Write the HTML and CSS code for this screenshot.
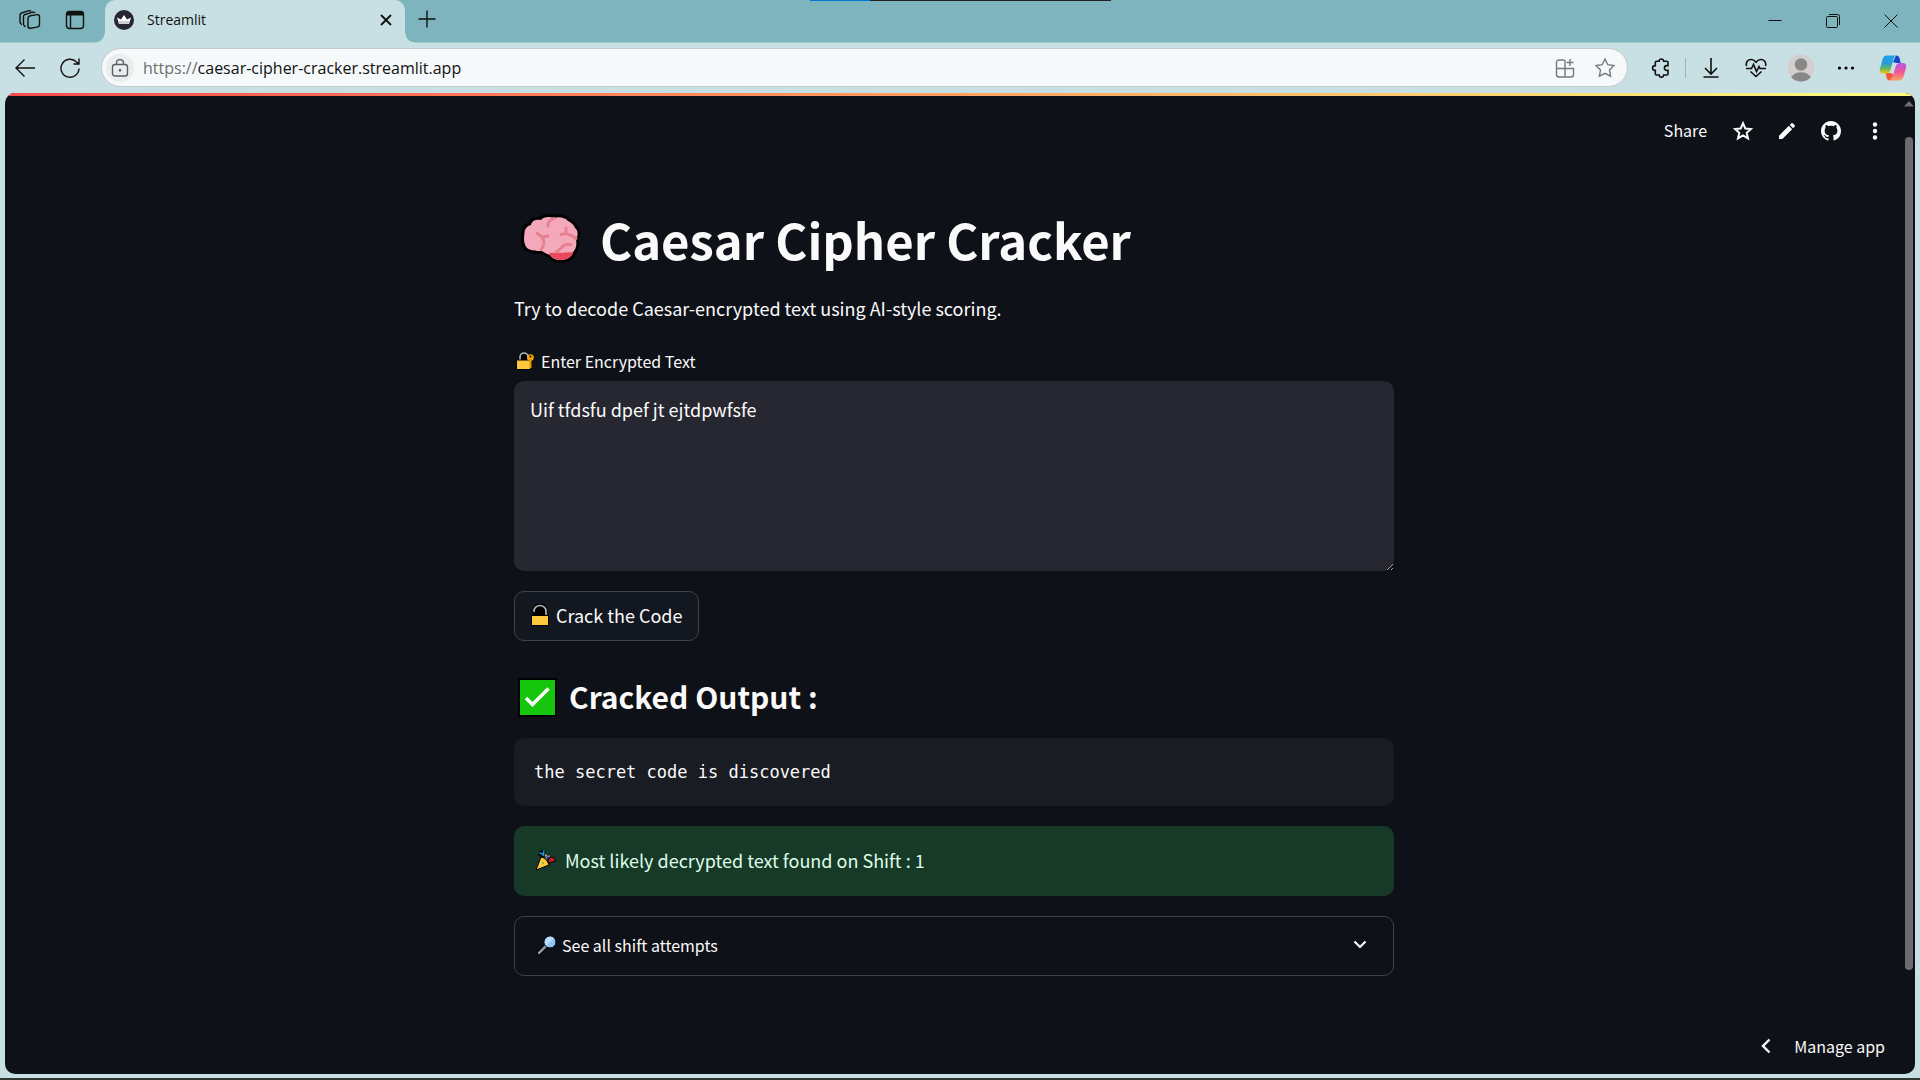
FILE: index.html
```html
<!DOCTYPE html>
<html lang="en">
<head>
<meta charset="utf-8">
<title>Streamlit</title>
<link rel="stylesheet" href="styles.css">
</head>
<body>
<header class="tabstrip">
  <div class="share-bar"></div>
  <div class="strip-tools">
    <button class="strip-btn" aria-label="Workspaces"><svg width="22" height="22" viewBox="0 0 22 22" class="line"><rect x="9" y="6.500" width="11.500" height="12.500" rx="2.500" transform="skewY(-9) translate(0 2)"/><path d="M6.500 17.500 5.500 17q-1-.5-1-2V7.500q0-1.500 1.500-2L14 3.200q1.500-.3 2 .8M3 15.500q-2-.5-2-2.500V6q0-1.500 1.500-2L10 1.700q1.500-.4 2 .8"/></svg></button>
    <button class="strip-btn" aria-label="Tab actions"><svg width="20" height="20" viewBox="0 0 20 20" class="line"><rect x="1.500" y="1.500" width="17" height="17" rx="3"/><path d="M2 3.500h16" stroke-width="4"/><path d="M5.500 5v13"/></svg></button>
  </div>
  <div class="tab">
    <svg width="20" height="20" viewBox="0 0 20 20"><circle cx="10" cy="10" r="10" fill="#262730"/><path d="M3 7.500 7 9.500 10 5l3 4.500 4-2-2 6.500H5z" fill="#fff"/><path d="m4.500 11 11 0-1 3H5.300z" fill="#d0d0d4"/></svg>
    <span class="tab-title">Streamlit</span>
    <button class="tab-close" aria-label="Close tab"><svg width="12" height="12" viewBox="0 0 12 12" class="line"><path d="m1 1 10 10M11 1 1 11" stroke-width="1.800"/></svg></button>
  </div>
  <button class="new-tab" aria-label="New tab"><svg width="18" height="18" viewBox="0 0 18 18" class="line"><path d="M9 .5v17M.5 9h17"/></svg></button>
  <div class="window-controls">
    <button aria-label="Minimize"><svg width="14" height="14" viewBox="0 0 14 14" class="line thin"><path d="M.5 6.500h13"/></svg></button>
    <button aria-label="Restore"><svg width="14" height="14" viewBox="0 0 14 14" class="line thin"><rect x=".5" y="2.500" width="11" height="11" rx="1"/><path d="M3 .5h8.500a2 2 0 0 1 2 2V11"/></svg></button>
    <button aria-label="Close"><svg width="14" height="14" viewBox="0 0 14 14" class="line thin"><path d="m.5.5 13 13m0-13-13 13"/></svg></button>
  </div>
</header>

<nav class="toolbar">
  <button class="tool" aria-label="Back"><svg width="20" height="20" viewBox="0 0 20 20" class="line"><path d="M9.500 1.500 1 10l8.500 8.500M1 10h19"/></svg></button>
  <button class="tool" aria-label="Refresh"><svg width="20" height="20" viewBox="0 0 20 20" class="line"><path d="M19 10.500A9 9 0 1 1 16.500 4L19 6M19 .5V6h-5.500"/></svg></button>
  <div class="address">
    <span class="site-info"><svg width="18" height="18" viewBox="0 0 18 18" class="line muted"><rect x="1.500" y="5.500" width="15" height="11.500" rx="2.500"/><path d="M5.500 5.500V4a3.500 3.500 0 0 1 7 0v1.500"/><circle cx="9" cy="11.300" r=".7" fill="#5c5f61"/></svg></span>
    <label class="scheme" for="url">https://</label><input id="url" class="url" type="text" value="caesar-cipher-cracker.streamlit.app">
    <button class="in-tool" aria-label="App available"><svg width="20" height="20" viewBox="0 0 20 20" class="line faint"><path d="M9.500 2H4a2.500 2.500 0 0 0-2.500 2.500v12A2.500 2.500 0 0 0 4 19h12a2.500 2.500 0 0 0 2.500-2.500v-6h-17M10 2v17M15 1v7M11.500 4.500h7"/></svg></button>
    <button class="in-tool" aria-label="Favorite"><svg width="20" height="20" viewBox="0 0 20 20" class="line faint"><path d="m10 1 2.800 5.700 6.200.9-4.500 4.400 1.100 6.200L10 15.300l-5.600 2.900L5.500 12 1 7.600l6.200-.9z"/></svg></button>
  </div>
  <button class="tool" aria-label="Extensions"><svg width="20" height="20" viewBox="0 0 20 20" class="line"><path d="M5.500 3.200h2.700a2.200 2.200 0 0 1 4.400 0h3.200q1.200 0 1.200 1.200v3.200h-1.200a2.400 2.400 0 0 0 0 4.800h1.200v3.400q0 1.200-1.200 1.200h-3.200a2.200 2.200 0 0 1-4.400 0H5.500q-1.200 0-1.200-1.200v-3.400H4a2.400 2.400 0 0 1 0-4.800h.3V4.400q0-1.200 1.200-1.200z" stroke-width="1.600"/></svg></button>
  <span class="divider"></span>
  <button class="tool" aria-label="Downloads"><svg width="20" height="20" viewBox="0 0 20 20" class="line"><path d="M10 0v16M4 10l6 6 6-6M2.500 19h15" stroke-width="1.600"/></svg></button>
  <button class="tool" aria-label="Browser essentials"><svg width="22" height="20" viewBox="0 0 22 20" class="line"><path d="M1.500 8C.5 4 3 1.500 6 1.500c2.500 0 4 1.500 5 2.800 1-1.300 2.500-2.800 5-2.800 3 0 5.500 2.500 4.500 6.500M1 10.500h5.500l2-4 3 7 2.500-5 1 2h6M5.500 13.500l5.500 5 5.500-5" stroke-width="1.600"/></svg></button>
  <button class="tool" aria-label="Profile"><svg width="28" height="28" viewBox="0 0 28 28"><defs><clipPath id="av"><circle cx="14" cy="14" r="13.500"/></clipPath></defs><g clip-path="url(#av)"><path fill="#d2d0ce" d="M0 0h28v28H0z"/><circle cx="14" cy="10.500" r="6.200" fill="#8a8886"/><path d="M3 28c0-13 22-13 22 0z" fill="#8a8886"/></g></svg></button>
  <button class="tool" aria-label="More"><svg width="18" height="18" viewBox="0 0 18 18"><circle cx="2.500" cy="9" r="1.600"/><circle cx="9" cy="9" r="1.600"/><circle cx="15.500" cy="9" r="1.600"/></svg></button>
  <button class="tool copilot" aria-label="Copilot"><svg width="28" height="28" viewBox="0 0 28 28"><defs>
    <linearGradient id="cpa" x1="0" y1="0" x2="0" y2="1"><stop offset="0" stop-color="#18a5e8"/><stop offset=".45" stop-color="#2b9bd8"/><stop offset=".7" stop-color="#5cb85c"/><stop offset="1" stop-color="#f5c518"/></linearGradient>
    <linearGradient id="cpb" x1="0" y1="0" x2="0" y2="1"><stop offset="0" stop-color="#b45ce8"/><stop offset=".5" stop-color="#f0559a"/><stop offset="1" stop-color="#ffa15e"/></linearGradient></defs>
    <path d="M17 1.500c2 0 3 1 3.500 2.500L21.700 9H17l-3-1z" fill="#1747c9"/><path d="M11 26.500c-2 0-3-1-3.300-2.500L6.500 19H12l3 2z" fill="#f4573a"/>
    <path d="M8 1.500h9.500c-2 .5-2.600 2-3.100 4L11.700 15c-.8 3-2 4.500-4.700 4.500H4C1 19.500.3 17 1 14.500L3.500 5.500c.8-2.800 2-4 4.500-4z" fill="url(#cpa)"/>
    <path d="M20 26.500h-9.500c2-.5 2.600-2 3.100-4l2.700-9c.8-3 2-4.500 4.700-4.500h3c3 0 3.700 2.500 3 5l-2.500 8.500c-.8 2.800-2 4-4.500 4z" fill="url(#cpb)"/></svg></button>
</nav>

<main class="viewport">
  <div class="app">
    <div class="rainbow"></div>
    <header class="app-header">
      <button class="share">Share</button>
      <button aria-label="Star"><svg width="20" height="20" viewBox="0 0 20 20" fill="none" stroke="#fafafa" stroke-width="2"><path d="m10 2.200 2.300 5.300 5.700.5-4.300 3.800 1.300 5.600-5-3-5 3 1.300-5.600L2 8l5.700-.5z"/></svg></button>
      <button aria-label="Edit"><svg width="16" height="16" viewBox="3 3 18 18" fill="#fafafa"><path d="M3 17.250V21h3.750L17.810 9.940l-3.750-3.750L3 17.250zM20.710 7.040c.39-.39.39-1.020 0-1.410l-2.340-2.340a1 1 0 0 0-1.410 0l-1.830 1.830 3.750 3.750 1.830-1.830z"/></svg></button>
      <button aria-label="GitHub"><svg width="20" height="20" viewBox="0 0 16 16" fill="#fafafa"><path d="M8 0C3.580 0 0 3.580 0 8c0 3.540 2.290 6.530 5.470 7.590.4.070.55-.17.55-.38 0-.19-.01-.82-.01-1.490-2.010.37-2.530-.49-2.690-.94-.09-.23-.48-.94-.82-1.130-.28-.15-.68-.52-.01-.53.63-.01 1.080.58 1.230.82.72 1.210 1.870.87 2.330.66.070-.52.28-.87.51-1.070-1.780-.2-3.640-.89-3.640-3.950 0-.87.31-1.590.82-2.150-.08-.2-.36-1.020.08-2.120 0 0 .67-.21 2.200.82.640-.18 1.320-.27 2-.27s1.360.09 2 .27c1.530-1.040 2.200-.82 2.200-.82.440 1.100.16 1.920.08 2.120.51.560.82 1.270.82 2.150 0 3.070-1.870 3.750-3.650 3.950.29.250.54.730.54 1.480 0 1.070-.01 1.930-.01 2.200 0 .21.15.46.55.38A8.010 8.010 0 0 0 16 8c0-4.420-3.580-8-8-8z"/></svg></button>
      <button aria-label="Menu"><svg width="18" height="18" viewBox="0 0 18 18" fill="#fafafa"><circle cx="9" cy="2.500" r="2.200"/><circle cx="9" cy="9" r="2.200"/><circle cx="9" cy="15.500" r="2.200"/></svg></button>
    </header>

    <section class="block">
      <h1 class="title"><svg class="e-brain" viewBox="6 9 60 50" role="img" aria-label="Brain"><path d="M9.500 28C9.500 24 12 21 16 20c1-5 6-5.500 10-5 2-3 8-4 13-2 5-1.500 11-.5 14 3 4 2 6 4 7 7 3 2 3.500 7 1 11 1 6 0 10-3 13-1 5-6 8-12 8s-9-2-11-5c-4-1-6-3-8-4-5 0-11 0-15-3-3-3-3.500-9-2.500-15z" fill="#f4a9ba" stroke="#000" stroke-width="6" stroke-linejoin="round" paint-order="stroke"/><path d="M34 48c3-.5 12 0 16-.5l8.500-.2C56 52.500 52 55 46 55s-9.500-2.500-12-7z" fill="#e8475c"/><path d="M39 13.500c-4 1-6 3.500-6 7.500M22 28l5 4 6-1M27 32c3 4 2 9-1 12.500M51 23v5.500M46 29.500c6-2 10 .5 15 4M56 39.500c-8-2-9 4.500-15 7.500" fill="none" stroke="#e6828f" stroke-width="3" stroke-linecap="round" stroke-linejoin="round"/></svg><span>Caesar Cipher Cracker</span></h1>
      <p class="lead">Try to decode Caesar-encrypted text using AI-style scoring.</p>

      <label class="field-label" for="cipher"><svg class="e-small" viewBox="0 0 20 20" aria-hidden="true"><path d="M4 10V7a4 4 0 0 1 8 0v3" fill="#000" stroke="#000" stroke-width="4"/><path d="M4 10V6a4 4 0 0 1 8 0v3" fill="none" stroke="#b4b8bc" stroke-width="1.600"/><path d="M.5 9h14v9.500H.5z" fill="#ffc83d" stroke="#000"/><circle cx="14.500" cy="6.500" r="3.300" fill="#f3a600"/><path d="M13.500 8h2v9h-2z" fill="#e19600"/><circle cx="14.500" cy="5.500" r=".9"/></svg><span>Enter Encrypted Text</span></label>
      <textarea id="cipher" class="cipher" spellcheck="false">Uif tfdsfu dpef jt ejtdpwfsfe</textarea>

      <button class="crack"><svg class="e-lock" viewBox="0 0 20 22" aria-hidden="true"><path d="M5 12V6.500a5 5 0 0 1 10 0V12" fill="#000" stroke="#000" stroke-width="5"/><path d="M4 8V7a6 5.500 0 0 1 12 0v5" fill="none" stroke="#b4b8bc" stroke-width="1.600"/><path d="M1.500 11.500h17v10h-17z" fill="#ffc83d" stroke="#000"/></svg><span>Crack the Code</span></button>

      <h2 class="subtitle"><svg class="e-check" viewBox="0 0 39 39" role="img" aria-label="Done"><path d="M0 0h39v39H0z"/><path d="M2 2h35v35H2z" fill="#16c60c"/><path d="m8 20 6.500 6.500L30.500 10.500" fill="none" stroke="#fff" stroke-width="3.500"/></svg><span>Cracked Output :</span></h2>
      <pre class="code"><code>the secret code is discovered</code></pre>

      <div class="success" role="status"><svg class="e-party" viewBox="0 0 22 22" aria-hidden="true"><path d="M1 21 6 8q6 1 8 8z" fill="#ffc83d" stroke="#000"/><path d="m4.500 3 4 2.500M9 1.500l-2 5M4 5l5 2" stroke="#000" stroke-width="4"/><path d="m4.500 4 5 1.500M9 1.500l-1 5.500" stroke="#1b9de2" stroke-width="1.500"/><path d="M13 13q1-6 5-5l3 4-7 2z" fill="#c3202a" stroke="#000"/><path d="M11 10q0-3 4-3" stroke="#7a6bd0" stroke-width="1.500" fill="none"/><circle cx="11" cy="6.500" r=".9" fill="#ffd23d"/><circle cx="8" cy="14" r="1" fill="#5bbf4a"/></svg><span>Most likely decrypted text found on Shift : 1</span></div>

      <button class="expander" aria-expanded="false"><svg class="e-small" viewBox="0 0 20 20" aria-hidden="true"><path d="m9 11-7 7" stroke="#000" stroke-width="5" stroke-linecap="round"/><path d="m9 11-7 7" stroke="#8d989d" stroke-width="2.500" stroke-linecap="round"/><circle cx="13" cy="7" r="6" fill="#8fc6f5" stroke="#000"/><path d="M9.200 11A5.500 5.500 0 0 1 17 3.200z" fill="#b9dcfa"/></svg><span class="expander-label">See all shift attempts</span><svg width="14" height="10" viewBox="0 0 14 10" fill="none" stroke="#fafafa" stroke-width="2.200"><path d="m1.500 1.500 5.500 5.500 5.500-5.500"/></svg></button>
    </section>

    <footer class="manage"><button class="manage-btn"><svg width="10" height="16" viewBox="0 0 10 16" fill="none" stroke="#fafafa" stroke-width="2.400"><path d="M8.500 1.500 2 8l6.500 6.500"/></svg><span>Manage app</span></button></footer>
  </div>
  <div class="scrollbar"><svg width="10" height="6" viewBox="0 0 10 6"><path d="M0 5.500 5 0l5 5.500z" fill="#6b6c70"/></svg><div class="thumb"></div></div>
</main>
<div class="taskbar-edge"></div>
</body>
</html>
```
FILE: styles.css
```css
* { box-sizing: border-box; }
body {
  margin: 0;
  min-height: 100vh;
  display: flex;
  flex-direction: column;
  background: #c8dfe3;
  font-family: "Noto Sans CJK SC", "Noto Sans", sans-serif;
}
button {
  border: 0;
  padding: 0;
  margin: 0;
  background: none;
  color: inherit;
  font: inherit;
  display: flex;
  align-items: center;
  justify-content: center;
}
svg { flex: none; display: block; }
.line { fill: none; stroke: #111; stroke-width: 1.4px; }
.thin { stroke-width: 1px; }
.muted { stroke: #5c5f61; }
.faint { stroke: #77797b; }

/* Tab strip */
.tabstrip {
  position: relative;
  height: 43px;
  display: flex;
  background: #7eb4be;
  border-bottom: 1px solid #a3c9d0;
  font-family: "Open Sans", "Noto Sans", sans-serif;
}
.share-bar {
  position: absolute;
  inset: 0 0 auto;
  margin: 0 auto;
  width: 301px;
  height: 1px;
  background: linear-gradient(90deg, #0078d7 60px, #222 60px);
}
.strip-tools { width: 105px; display: flex; padding-left: 7px; padding-bottom: 2px; }
.strip-btn { width: 45px; }
.tab {
  position: relative;
  width: 300px;
  height: 43px;
  padding: 0 13px 4px 9px;
  display: flex;
  align-items: center;
  gap: 13px;
  background: #c8dfe3;
  border-radius: 10px 10px 0 0;
}
.tab::before,
.tab::after {
  content: "";
  position: absolute;
  bottom: 0;
  width: 10px;
  height: 10px;
}
.tab::before { right: 100%; background: radial-gradient(circle at 0 0, transparent 9px, #c8dfe3 10px); }
.tab::after { left: 100%; background: radial-gradient(circle at 100% 0, transparent 9px, #c8dfe3 10px); }
.tab-title { flex: 1; font-size: 14px; line-height: 20px; color: #111; }
.new-tab { width: 44px; padding-bottom: 4px; }
.window-controls { margin-left: auto; display: flex; }
.window-controls button { width: 58px; }

/* Toolbar */
.toolbar {
  height: 50px;
  padding: 0 2px 1px;
  display: flex;
  align-items: center;
  font-family: "Open Sans", "Noto Sans", sans-serif;
}
.tool { width: 45px; height: 40px; }
.copilot { width: 50px; }
.address {
  flex: 1;
  height: 39px;
  margin: 0 10px 0 9px;
  padding: 0 2px 0 4px;
  display: flex;
  align-items: center;
  background: #f5f9fa;
  border: 1px solid #c6c8c9;
  border-radius: 20px;
  font-size: 16px;
}
.site-info {
  width: 28px;
  height: 28px;
  margin-right: 9px;
  display: flex;
  align-items: center;
  justify-content: center;
  border-radius: 50%;
  background: #e9edee;
}
.scheme { color: #6b6e70; }
.url {
  flex: 1;
  min-width: 0;
  padding: 0;
  border: 0;
  outline: 0;
  background: none;
  font: inherit;
  color: #111;
}
.in-tool { width: 40px; height: 36px; }
.divider { width: 1px; height: 20px; margin: 0 2px; background: #9fb4b8; }

/* Page */
.viewport {
  position: relative;
  flex: 1;
  margin: 0 5px 4px;
  display: flex;
  background: #0e1117;
  border-radius: 10px;
  overflow: hidden;
  color: #fafafa;
}
.app { flex: 1; display: flex; flex-direction: column; }
.rainbow {
  position: absolute;
  inset: 0 0 auto;
  height: 3px;
  background: linear-gradient(90deg, #ff4b4b, #ffb266 60%, #fffd80);
}
.app-header {
  height: 75px;
  padding-right: 6px;
  display: flex;
  align-items: center;
  justify-content: flex-end;
}
.app-header button { width: 44px; height: 32px; }
.app-header .share { width: auto; margin-right: 14px; padding-bottom: 2px; font-size: 16px; }
.block {
  width: 100%;
  max-width: 880px;
  margin: 0 auto;
  padding-top: 40px;
  display: flex;
  flex-direction: column;
}
.title,
.subtitle { margin: 0; display: flex; align-items: center; font-weight: 700; }
.title { gap: 19px; padding: 0 0 4px 7px; font-size: 49px; line-height: 62px; }
.e-brain { width: 60px; height: 50px; }
.lead { margin: 18px 0 0; font-size: 18px; line-height: 32px; }
.field-label {
  margin-top: 25px;
  padding-left: 2px;
  display: flex;
  align-items: center;
  gap: 5px;
  font-size: 16px;
  line-height: 24px;
}
.e-small { width: 20px; height: 20px; }
.e-lock { width: 20px; height: 22px; }
.cipher {
  height: 190px;
  margin-top: 8px;
  padding: 13px 16px;
  border: 0;
  border-radius: 10px;
  outline: 0;
  background: #262730;
  color: #fafafa;
  font: inherit;
  font-size: 18px;
  line-height: 30px;
  resize: vertical;
}
.crack {
  align-self: flex-start;
  height: 50px;
  margin-top: 20px;
  padding: 0 15px 2px;
  gap: 6px;
  background: #131720;
  border: 1px solid #41444c;
  border-radius: 10px;
  font-size: 18px;
}
.subtitle { margin-top: 35px; padding-left: 4px; gap: 12px; font-size: 30px; line-height: 40px; }
.subtitle span { padding-bottom: 2px; }
.e-check { width: 39px; height: 39px; }
.code {
  margin: 20px 0 0;
  padding: 20px;
  background: #1a1c24;
  border-radius: 10px;
  font-family: "DejaVu Sans Mono", monospace;
  font-size: 17px;
  line-height: 28px;
}
.code code { font: inherit; }
.success {
  margin-top: 20px;
  padding: 19px 21px 21px;
  display: flex;
  align-items: center;
  gap: 8px;
  background: #173928;
  border-radius: 10px;
  color: #dffde9;
  font-size: 18px;
  line-height: 30px;
}
.e-party { width: 22px; height: 22px; }
.expander {
  height: 60px;
  margin-top: 20px;
  padding: 0 26px 2px 22px;
  gap: 5px;
  border: 1px solid #3e4046;
  border-radius: 10px;
  font-size: 16px;
}
.expander-label { flex: 1; text-align: left; }
.manage { margin-top: auto; padding: 0 18px 14px; display: flex; justify-content: flex-end; }
.manage-btn { height: 28px; gap: 23px; font-size: 16px; }

.scrollbar {
  width: 12px;
  padding: 8px 1px 104px;
  display: flex;
  flex-direction: column;
  align-items: center;
  gap: 30px;
}
.thumb { flex: 1; width: 8px; border-radius: 4px; background: #6b6c70; }
.taskbar-edge { height: 2px; background: #2f3735; }
```
